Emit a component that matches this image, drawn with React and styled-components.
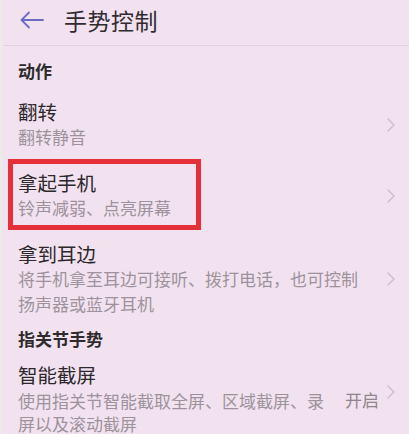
import React from 'react';
import styled, { createGlobalStyle } from 'styled-components';

const GlobalStyle = createGlobalStyle`
  html, body {
    margin: 0;
    padding: 0;
    background: #f2e2ef;
  }
  * { box-sizing: border-box; }
`;

const Page = styled.div`
  position: relative;
  width: 409px;
  height: 434px;
  overflow: hidden;
  background: #f2e2ef;
  border-left: 3px solid #ece9e9;
  font-family: "Noto Sans CJK SC", "Noto Sans", sans-serif;
`;

const Header = styled.div`
  display: flex;
  align-items: center;
  height: 46px;
  padding: 0 0 6px 17px;
  border-bottom: 1px solid #e3d2e0;
`;

const Back = styled.div`
  display: flex;
  width: 24px;
  margin-right: 20px;
  color: #6a6cc4;
`;

const Title = styled.h1`
  margin: 0;
  font-size: 23px;
  font-weight: 400;
  letter-spacing: 0.5px;
  color: #2f2b30;
`;

const Section = styled.div`
  padding: ${({ $top }) => $top}px 15px ${({ $bottom }) => $bottom}px;
  font-size: 17px;
  font-weight: 700;
  line-height: 20px;
  color: #2e2a2e;
`;

const Row = styled.div`
  display: flex;
  align-items: center;
  padding: 11px 14px 11px 15px;
`;

const Texts = styled.div`
  flex: 1;
  min-width: 0;
`;

const ItemTitle = styled.div`
  font-size: 19.5px;
  line-height: 24px;
  color: #2c282c;
`;

const Sub = styled.div`
  width: ${({ $w }) => $w || 'auto'};
  margin-top: ${({ $gap }) => $gap || 0}px;
  font-size: 17px;
  line-height: ${({ $lh }) => $lh || 25}px;
  color: #9d929c;
`;

const Value = styled.span`
  margin-right: 8px;
  font-size: 17px;
  color: #8f858e;
`;

const Chevron = styled.svg`
  flex: none;
  width: 8px;
  height: 14px;
  margin-top: ${({ $up }) => $up || 0}px;
`;

const Highlight = styled.div`
  position: absolute;
  left: 5px;
  top: 159px;
  width: 193px;
  height: 71px;
  border: 5px solid #e5303a;
`;

const Arrow = () => (
  <svg width="24" height="18" viewBox="0 0 24 18" fill="none" stroke="currentColor" strokeWidth="1.8" strokeLinecap="round" strokeLinejoin="round">
    <path d="M23 9H2" />
    <path d="M9 1.5L1.5 9 9 16.5" />
  </svg>
);

const Arr = ({ up }) => (
  <Chevron $up={up} viewBox="0 0 8 14" fill="none" stroke="#cdbfcb" strokeWidth="1.5" strokeLinecap="round" strokeLinejoin="round">
    <path d="M1 1l6 6-6 6" />
  </Chevron>
);

export default function App() {
  return (
    <>
      <GlobalStyle />
      <Page>
        <Header>
          <Back><Arrow /></Back>
          <Title>手势控制</Title>
        </Header>

        <Section $top={15} $bottom={8}>动作</Section>

        <Row>
          <Texts>
            <ItemTitle>翻转</ItemTitle>
            <Sub>翻转静音</Sub>
          </Texts>
          <Arr />
        </Row>

        <Row>
          <Texts>
            <ItemTitle>拿起手机</ItemTitle>
            <Sub>铃声减弱、点亮屏幕</Sub>
          </Texts>
          <Arr />
        </Row>

        <Row>
          <Texts>
            <ItemTitle>拿到耳边</ItemTitle>
            <Sub $w="350px">将手机拿至耳边可接听、拨打电话，也可控制扬声器或蓝牙耳机</Sub>
          </Texts>
          <Arr />
        </Row>

        <Section $top={2} $bottom={3}>指关节手势</Section>

        <Row>
          <Texts>
            <ItemTitle>智能截屏</ItemTitle>
            <Sub $gap={2} $lh={23} $w="316px">使用指关节智能截取全屏、区域截屏、录屏以及滚动截屏</Sub>
          </Texts>
          <Value>开启</Value>
          <Arr up={-14} />
        </Row>

        <Highlight />
      </Page>
    </>
  );
}
